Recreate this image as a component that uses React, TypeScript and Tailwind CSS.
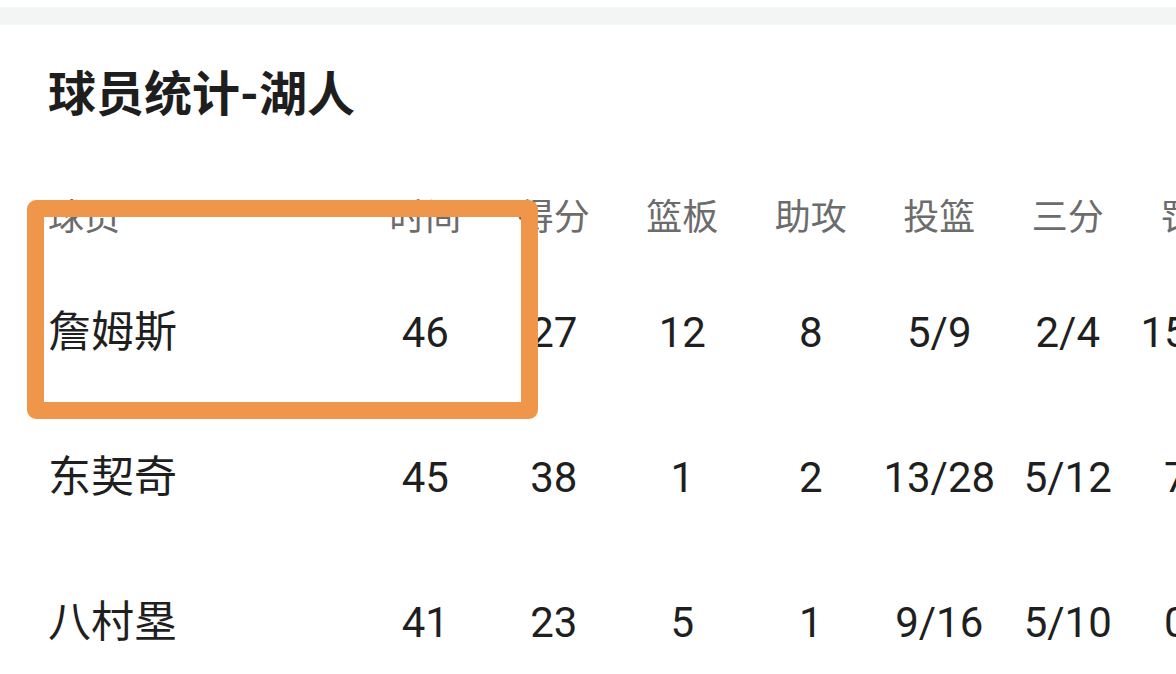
import React from "react";

const COLS = ["时间", "得分", "篮板", "助攻", "投篮", "三分", "罚球"];

const ROWS = [
  { name: "詹姆斯", stats: ["46", "27", "12", "8", "5/9", "2/4", "15/16"] },
  { name: "东契奇", stats: ["45", "38", "1", "2", "13/28", "5/12", "7/9"] },
  { name: "八村塁", stats: ["41", "23", "5", "1", "9/16", "5/10", "0/0"] },
];

const font = "font-['Roboto','Noto_Sans_CJK_SC',sans-serif]";

export default function App() {
  return (
    <div className={`relative h-[674px] w-[1176px] overflow-hidden bg-white ${font}`}>
      <div className="mt-[7px] h-[18px] bg-[#f3f4f4]" />

      <div className="pl-[48px]">
        <h2 className="mt-[40px] h-[60px] whitespace-nowrap text-[48px] font-bold leading-[60px] text-[#1e1e1e]">
          球员统计-湖人
        </h2>

        {/* Table */}
        <div className="mt-[51px] w-[1300px]">
          <div className="flex h-[84px] items-center text-[36px] text-[#6c6c6c]">
            <div className="w-[313px] shrink-0">球员</div>
            {COLS.map((c) => (
              <div key={c} className="w-[128.5px] shrink-0 text-center whitespace-nowrap">{c}</div>
            ))}
          </div>
          {ROWS.map((r) => (
            <div key={r.name} className="flex h-[145px] items-center text-[42px] text-[#1f1f1f]">
              <div className="w-[313px] shrink-0 text-[43px]">{r.name}</div>
              {r.stats.map((s, i) => (
                <div key={i} className="w-[128.5px] shrink-0 text-center whitespace-nowrap">{s}</div>
              ))}
            </div>
          ))}
        </div>
      </div>

      {/* highlight annotation */}
      <div className="absolute left-[27px] top-[200px] h-[219px] w-[511px] rounded-[9px] border-[17px] border-[#f0964b]" />
    </div>
  );
}
